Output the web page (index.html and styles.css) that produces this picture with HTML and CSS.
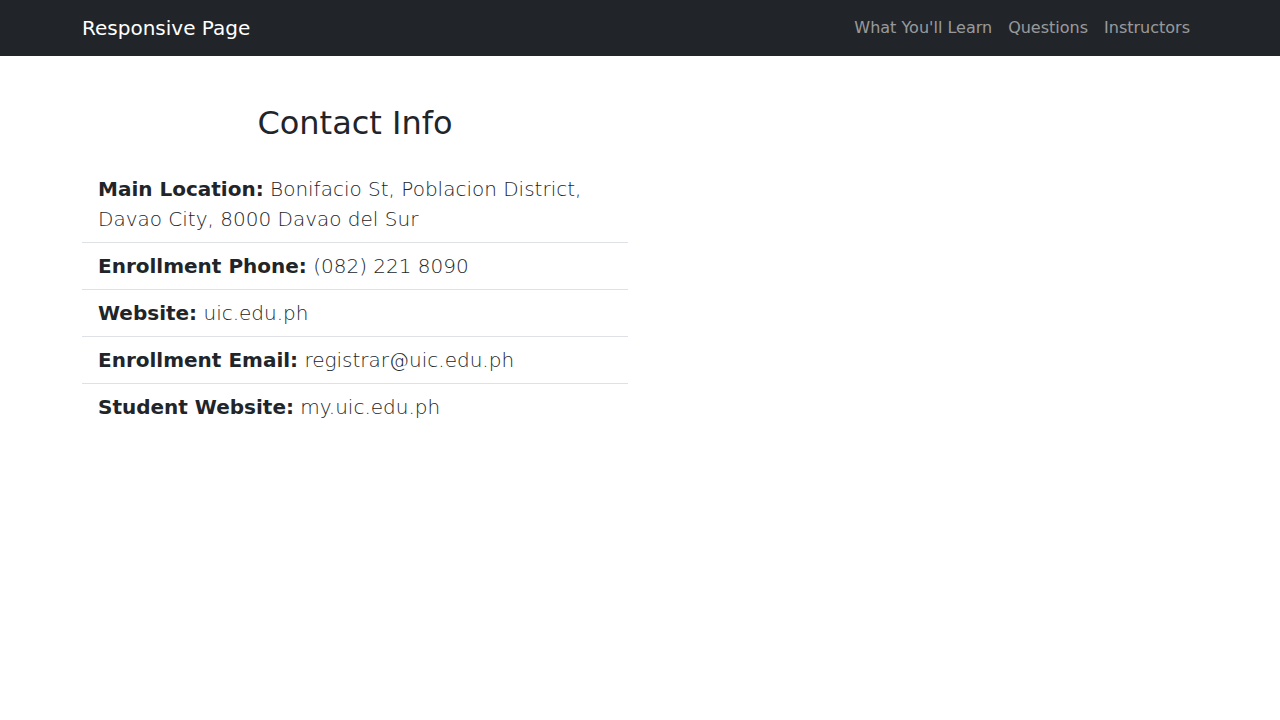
FILE: index.html
```html
<!DOCTYPE html>
<html lang="en">
<head>
<meta charset="utf-8">
<title>Responsive Page</title>
<link rel="stylesheet" href="styles.css">
</head>
<body>
<nav class="navbar">
  <div class="container nav-inner">
    <a class="brand" href="#">Responsive Page</a>
    <ul class="nav-links">
      <li><a href="#">What You'll Learn</a></li>
      <li><a href="#">Questions</a></li>
      <li><a href="#">Instructors</a></li>
    </ul>
  </div>
</nav>
<main class="container main">
  <section class="col">
    <h2 class="title">Contact Info</h2>
    <ul class="list">
      <li class="item"><b>Main Location:</b> Bonifacio St, Poblacion District, Davao City, 8000 Davao del Sur</li>
      <li class="item"><b>Enrollment Phone:</b> (082) 221 8090</li>
      <li class="item"><b>Website:</b> uic.edu.ph</li>
      <li class="item"><b>Enrollment Email:</b> registrar@uic.edu.ph</li>
      <li class="item"><b>Student Website:</b> my.uic.edu.ph</li>
    </ul>
  </section>
</main>
</body>
</html>
```
FILE: styles.css
```css
* { box-sizing: border-box; }
body {
  margin: 0;
  font-family: "DejaVu Sans", sans-serif;
  font-size: 16px;
  line-height: 1.5;
  color: #212529;
  background: #fff;
}
.container {
  width: 1140px;
  margin: 0 auto;
  padding: 0 12px;
}
.navbar {
  background: #212529;
  height: 56px;
}
.nav-inner {
  display: flex;
  align-items: center;
  justify-content: space-between;
  height: 56px;
}
.brand {
  color: #fff;
  font-size: 20px;
  text-decoration: none;
  line-height: 30px;
}
.nav-links {
  display: flex;
  list-style: none;
  margin: 0;
  padding: 0;
}
.nav-links a {
  display: block;
  padding: 8px;
  color: rgba(255,255,255,.55);
  text-decoration: none;
  line-height: 24px;
}
.main { padding-top: 48px; }
.col { width: 546px; }
.title {
  margin: 0 0 24px;
  font-size: 32px;
  font-weight: 500;
  line-height: 1.2;
  text-align: center;
}
.list {
  list-style: none;
  margin: 0;
  padding: 0;
}
.item {
  padding: 8px 16px;
  font-size: 20px;
  font-weight: 300;
  line-height: 30px;
  color: #212529;
  border-bottom: 1px solid #dee2e6;
}
.item:last-child { border-bottom: 0; }
.item b { font-weight: 700; }
```
